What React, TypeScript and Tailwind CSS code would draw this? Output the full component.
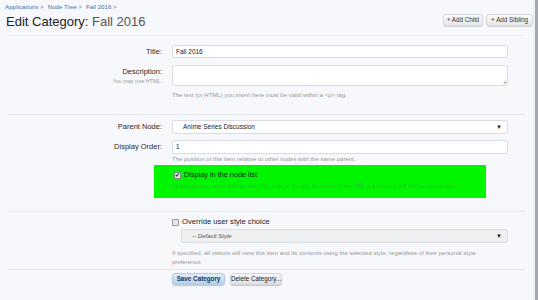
import React from "react";

const font = { fontFamily: '"Liberation Sans", Arial, sans-serif' };

function Label({ text, hint }: { text: string; hint?: string }) {
  return (
    <div className="w-[163px] shrink-0 pr-[1px] text-right">
      <div className="text-[7.5px] leading-[13px] text-[#2b2b2b]">{text}</div>
      {hint && <div className="text-[5.5px] italic leading-[6px] text-[#999]">{hint}</div>}
    </div>
  );
}

function Arrow() {
  return <span className="text-[6px] leading-none text-[#222]">▼</span>;
}

export default function App() {
  return (
    <div className="flex h-[300px] w-[538px] bg-[#f7f8fb]" style={font}>
      <div className="w-[533px] shrink-0">
        <div className="flex items-start justify-between">
          <div>
            <div className="flex items-center gap-[4px] pl-[5px] pt-[3px] text-[6.2px] leading-[8px] text-[#4a6fa0]">
              <span>Applications &gt;</span>
              <span>Node Tree &gt;</span>
              <span>Fall 2016 &gt;</span>
            </div>
            <h1 className="pl-[6px] pt-[2px] text-[13px] leading-[17px] text-[#222]">
              Edit Category: <span className="text-[#555]">Fall 2016</span>
            </h1>
          </div>
          <div className="flex gap-[3px] pt-[14px]">
            <button className="h-[12px] whitespace-nowrap rounded-[3px] border border-[#d6d9de] bg-gradient-to-b from-[#fbfbfb] to-[#e6e7ea] px-[3px] text-[6.3px] leading-[10px] text-[#333] shadow-[0_1px_1px_rgba(0,0,0,0.15)]">
              + Add Child
            </button>
            <button className="h-[12px] whitespace-nowrap rounded-[3px] border border-[#d6d9de] bg-gradient-to-b from-[#fbfbfb] to-[#e6e7ea] px-[4px] text-[6.3px] leading-[10px] text-[#333] shadow-[0_1px_1px_rgba(0,0,0,0.15)]">
              + Add Sibling
            </button>
          </div>
        </div>

        <div className="mx-[8px] mt-[5px] border-t border-[#eceef3]" />

        <div className="mt-[9px] flex gap-[9px]">
          <Label text="Title:" />
          <div className="flex h-[13px] w-[336px] items-center rounded-[2px] border border-[#d9dde3] bg-white px-[3px] text-[6.5px] text-[#222]">
            Fall 2016
          </div>
        </div>

        <div className="mt-[7px] flex gap-[9px]">
          <Label text="Description:" hint="You may use HTML." />
          <div>
            <div className="relative h-[21px] w-[336px] rounded-[2px] border border-[#d9dde3] bg-white">
              <span className="absolute bottom-[1px] right-[1px] text-[4px] leading-none text-[#aaa]">◢</span>
            </div>
            <div className="mt-[5px] text-[6px] leading-[8px] text-[#999]">
              The text (or HTML) you insert here must be valid within a &lt;p&gt; tag.
            </div>
          </div>
        </div>

        <div className="mx-[8px] mt-[15px] border-t border-[#e6e9ee]" />

        <div className="mt-[5px] flex gap-[9px]">
          <Label text="Parent Node:" />
          <div className="flex h-[14px] w-[336px] items-center justify-between rounded-[2px] border border-[#d9dde3] bg-white pl-[10px] pr-[5px] text-[6.5px] text-[#222]">
            <span>Anime Series Discussion</span>
            <Arrow />
          </div>
        </div>

        <div className="mt-[6px] flex gap-[9px]">
          <Label text="Display Order:" />
          <div>
            <div className="flex h-[14px] w-[336px] items-center rounded-[2px] border border-[#d9dde3] bg-white px-[3px] text-[6.5px] text-[#222]">
              1
            </div>
            <div className="mt-[1px] text-[6px] leading-[8px] text-[#999]">
              The position of this item relative to other nodes with the same parent.
            </div>
          </div>
        </div>

        <div className="ml-[154px] mt-[2px] h-[33px] w-[332px] bg-[#00f500] pl-[20px] pt-[5px]">
          <div className="flex items-center gap-[3px]">
            <span className="flex h-[7px] w-[7px] items-center justify-center rounded-[1px] border border-[#888] bg-[#ddd] text-[6px] leading-none text-[#222]">
              ✔
            </span>
            <span className="text-[7.3px] leading-[10px] text-[#222]">Display in the node list</span>
          </div>
          <div className="mt-[2px] whitespace-nowrap text-[6px] leading-[8px] text-[#30c030]">
            If unselected, users will not see this node in the list. However, if the URL is known, it will still be accessible.
          </div>
        </div>

        <div className="mx-[8px] mt-[13px] border-t border-[#e6e9ee]" />

        <div className="ml-[172px] mt-[5px] flex items-center gap-[3px]">
          <span className="h-[7px] w-[7px] rounded-[1px] border border-[#999] bg-[#e8e8e8]" />
          <span className="text-[7.6px] leading-[10px] text-[#222]">Override user style choice</span>
        </div>

        <div className="ml-[181px] mt-[2px] flex h-[14px] w-[327px] items-center justify-between rounded-[2px] border border-[#dcdfe4] bg-[#eff0f2] pl-[10px] pr-[5px] text-[6px] italic text-[#555]">
          <span>-- Default Style</span>
          <Arrow />
        </div>

        <div className="ml-[172px] mt-[6px] w-[318px] text-[6px] leading-[9px] text-[#999]">
          If specified, all visitors will view this item and its contents using the selected style, regardless of their personal style preference.
        </div>

        <div className="mx-[8px] mt-[2px] border-t border-[#e6e9ee]" />

        <div className="ml-[172px] mt-[3px] flex gap-[5px]">
          <button className="h-[12px] w-[53px] whitespace-nowrap rounded-[3px] border border-[#b7cbe0] bg-gradient-to-b from-[#e3edf8] to-[#b9cfe6] text-[6.3px] font-bold leading-[10px] text-[#1d3557] shadow-[0_1px_1px_rgba(0,0,0,0.2)]">
            Save Category
          </button>
          <button className="h-[12px] w-[52px] whitespace-nowrap rounded-[3px] border border-[#d3d5d9] bg-gradient-to-b from-[#f7f7f8] to-[#dfe0e3] px-0 text-[6.3px] leading-[10px] text-[#222] shadow-[0_1px_1px_rgba(0,0,0,0.2)]">
            Delete Category...
          </button>
        </div>
      </div>
      <div className="w-[2px] bg-[#eef0f3]" />
      <div className="w-[3px] bg-[#a3a9ae]" />
    </div>
  );
}
